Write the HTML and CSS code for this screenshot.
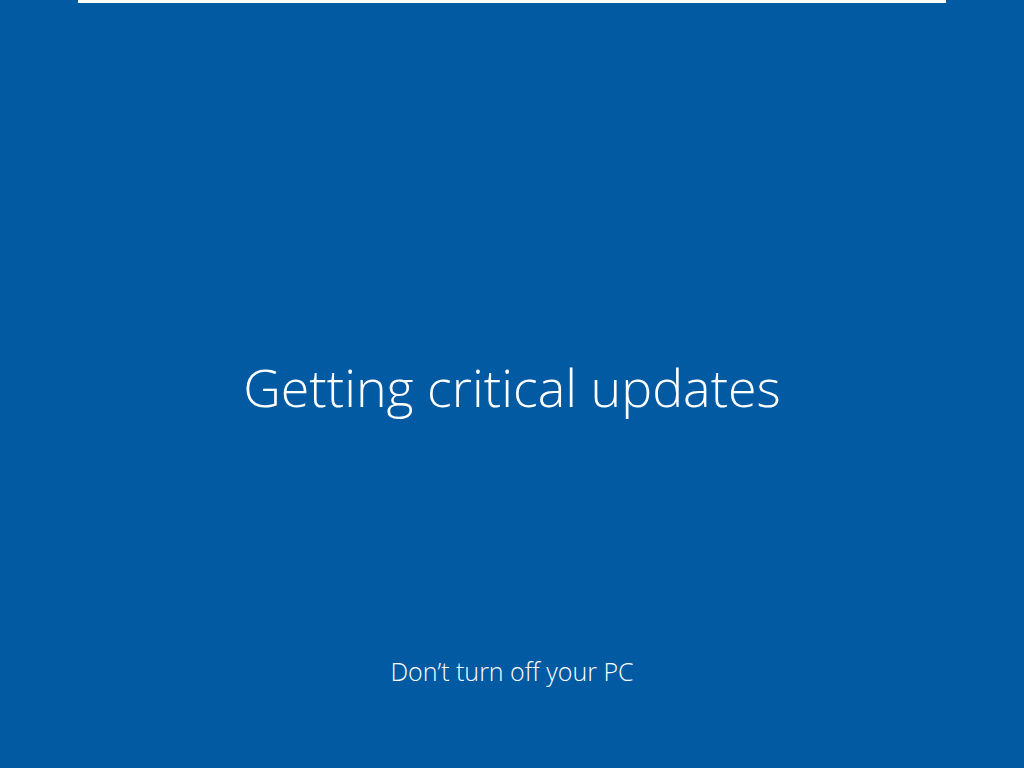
FILE: index.html
```html
<!DOCTYPE html>
<html>
<head>
<meta charset="utf-8">
<link rel="stylesheet" href="styles.css">
</head>
<body>
<div class="screen">
  <div class="topbar"></div>
  <div class="main">
    <h1 class="title">Getting critical updates</h1>
  </div>
  <p class="note">Don’t turn off your PC</p>
</div>
</body>
</html>
```
FILE: styles.css
```css
html, body {
  margin: 0;
  padding: 0;
  width: 1024px;
  height: 768px;
  overflow: hidden;
  background: #015aa2;
}
.screen {
  width: 1024px;
  height: 768px;
  display: flex;
  flex-direction: column;
  align-items: center;
  color: #ffffff;
  font-family: "Open Sans", "Noto Sans", sans-serif;
}
.topbar {
  width: 868px;
  height: 3px;
  background: #ffffff;
  flex: none;
}
.main {
  flex: 1;
  display: flex;
  align-items: center;
  justify-content: center;
  padding-top: 116px;
}
.title {
  margin: 0;
  font-weight: 300;
  font-size: 52px;
  line-height: 64px;
  letter-spacing: 0;
}
.note {
  margin: 0 0 81px 0;
  font-weight: 300;
  font-size: 25px;
  line-height: 32px;
}
```
